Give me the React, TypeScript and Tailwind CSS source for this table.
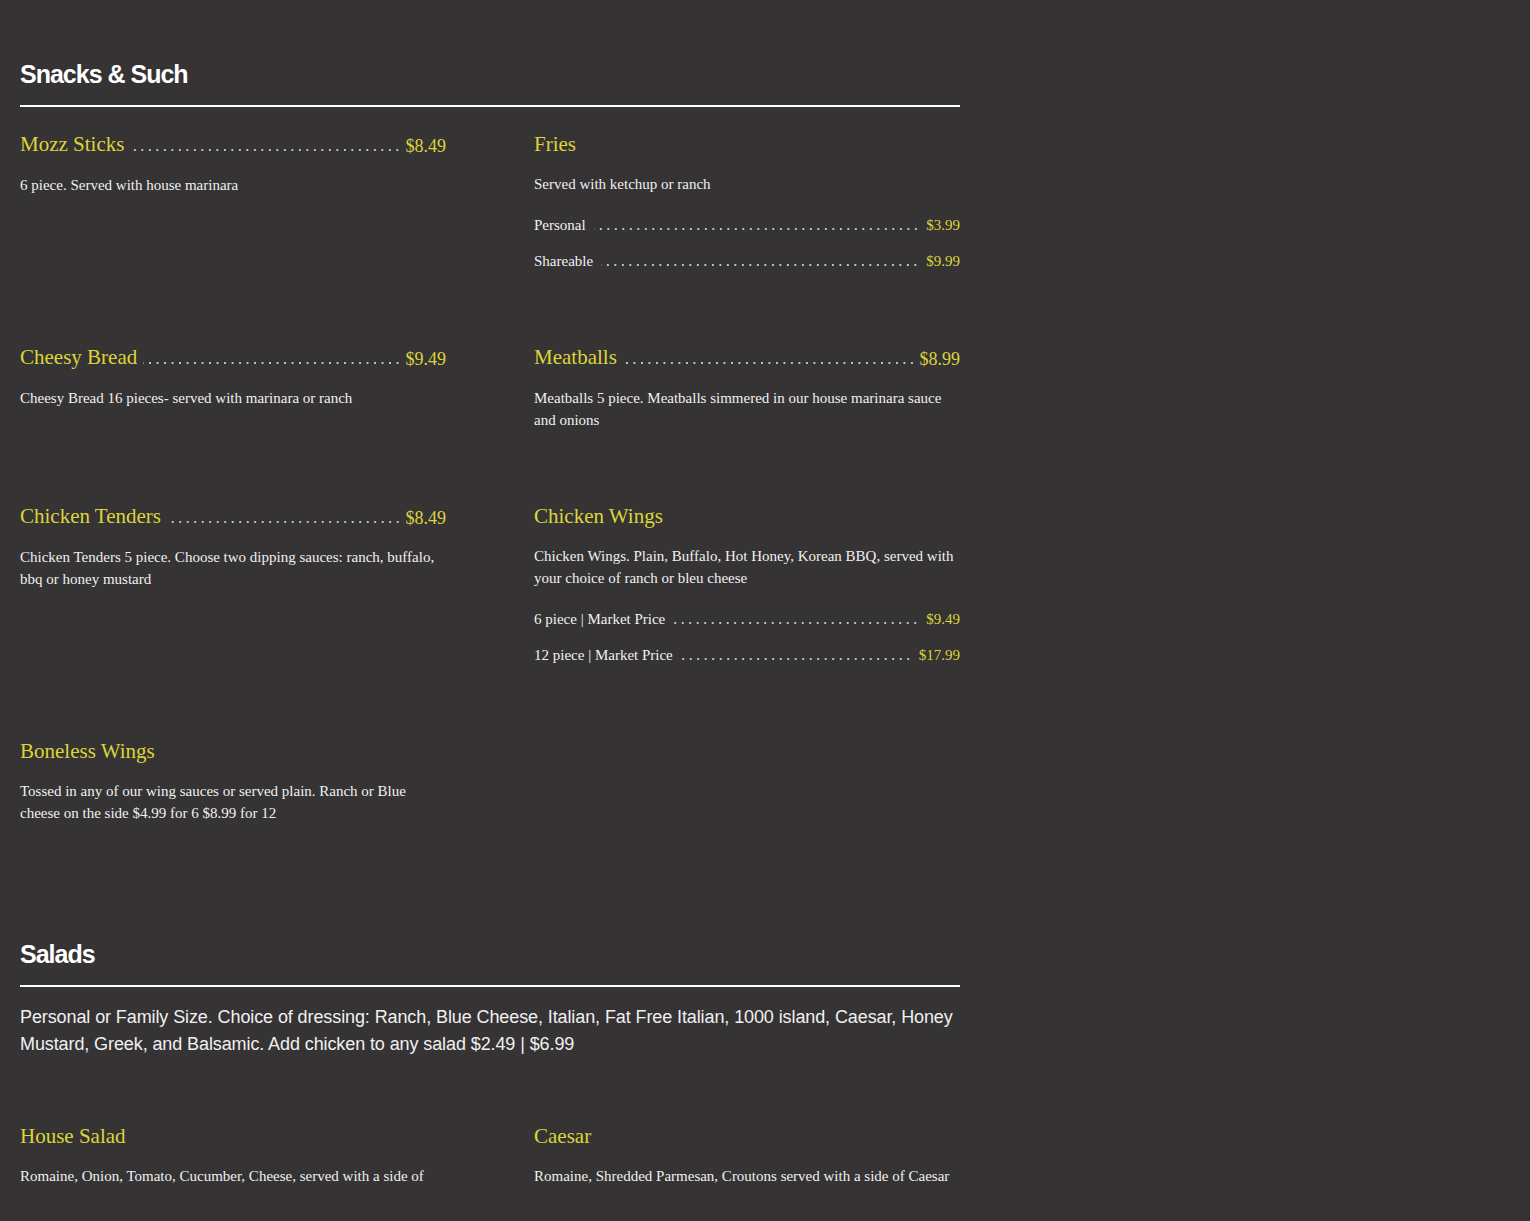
import React from "react";

type Sub = { label: string; price: string };
type Item = { name: string; price?: string; desc: string; subs?: Sub[] };

function Leader({ sub }: { sub?: boolean }) {
  return (
    <div
      className={`flex-1 min-w-0 h-[2px] bg-[radial-gradient(circle,#c4c4c4_0.7px,transparent_1.1px)] bg-[length:7.5px_2px] bg-repeat-x bg-right ${
        sub ? "ml-2 mr-[7px]" : "ml-1.5 mr-1"
      }`}
    />
  );
}

function MenuItem({ item }: { item: Item }) {
  return (
    <div className="flex flex-col">
      <div className="flex items-baseline">
        <span className="text-[21px] leading-[30px] text-[#dcd53a] whitespace-nowrap">{item.name}</span>
        {item.price && (
          <>
            <Leader />
            <span className="text-[18px] leading-[30px] text-[#dcd53a] whitespace-nowrap relative top-[1px]">
              {item.price}
            </span>
          </>
        )}
      </div>
      <p className="mt-[14px] text-[15px] leading-[22px] text-[#f0f0f0]">{item.desc}</p>
      {item.subs && (
        <div className="mt-[19px] flex flex-col gap-[14px]">
          {item.subs.map((s) => (
            <div key={s.label} className="flex items-baseline">
              <span className="text-[15px] leading-[22px] text-[#f0f0f0] whitespace-nowrap">{s.label}</span>
              <Leader sub />
              <span className="text-[15px] leading-[22px] text-[#dcd53a] whitespace-nowrap">{s.price}</span>
            </div>
          ))}
        </div>
      )}
    </div>
  );
}

function Heading({ title }: { title: string }) {
  return (
    <div>
      <h2
        className="text-[25px] leading-[36px] font-bold text-white tracking-[-0.04em]"
        style={{ fontFamily: '"Liberation Sans", Arial, sans-serif' }}
      >
        {title}
      </h2>
      <div className="mt-[13px] h-[2px] bg-white" />
    </div>
  );
}

const snacks: Item[] = [
  { name: "Mozz Sticks", price: "$8.49", desc: "6 piece. Served with house marinara" },
  {
    name: "Fries",
    desc: "Served with ketchup or ranch",
    subs: [
      { label: "Personal", price: "$3.99" },
      { label: "Shareable", price: "$9.99" },
    ],
  },
  { name: "Cheesy Bread", price: "$9.49", desc: "Cheesy Bread 16 pieces- served with marinara or ranch" },
  {
    name: "Meatballs",
    price: "$8.99",
    desc: "Meatballs 5 piece. Meatballs simmered in our house marinara sauce and onions",
  },
  {
    name: "Chicken Tenders",
    price: "$8.49",
    desc: "Chicken Tenders 5 piece. Choose two dipping sauces: ranch, buffalo, bbq or honey mustard",
  },
  {
    name: "Chicken Wings",
    desc: "Chicken Wings. Plain, Buffalo, Hot Honey, Korean BBQ, served with your choice of ranch or bleu cheese",
    subs: [
      { label: "6 piece | Market Price", price: "$9.49" },
      { label: "12 piece | Market Price", price: "$17.99" },
    ],
  },
  {
    name: "Boneless Wings",
    desc: "Tossed in any of our wing sauces or served plain. Ranch or Blue cheese on the side $4.99 for 6 $8.99 for 12",
  },
];

const salads: Item[] = [
  { name: "House Salad", desc: "Romaine, Onion, Tomato, Cucumber, Cheese, served with a side of" },
  { name: "Caesar", desc: "Romaine, Shredded Parmesan, Croutons served with a side of Caesar" },
];

export default function App() {
  return (
    <div
      className="min-h-screen bg-[#353334] px-5 pt-[56px] pb-20"
      style={{ fontFamily: '"Liberation Serif", "Times New Roman", serif' }}
    >
      <div className="w-[940px]">
        <section>
          <Heading title="Snacks & Such" />
          <div className="mt-[22px] grid grid-cols-2 gap-x-[88px] gap-y-[70px] items-start">
            {snacks.map((it) => (
              <MenuItem key={it.name} item={it} />
            ))}
          </div>
        </section>
        <section className="mt-[112px]">
          <Heading title="Salads" />
          <p
            className="mt-[17px] text-[18px] leading-[27px] text-[#f0f0f0] tracking-[-0.1px]"
            style={{ fontFamily: '"Liberation Sans", Arial, sans-serif' }}
          >
            Personal or Family Size. Choice of dressing: Ranch, Blue Cheese, Italian, Fat Free Italian, 1000 island,
            Caesar, Honey Mustard, Greek, and Balsamic. Add chicken to any salad $2.49 | $6.99
          </p>
          <div className="mt-[63px] grid grid-cols-2 gap-x-[88px] gap-y-[70px] items-start">
            {salads.map((it) => (
              <MenuItem key={it.name} item={it} />
            ))}
          </div>
        </section>
      </div>
    </div>
  );
}
